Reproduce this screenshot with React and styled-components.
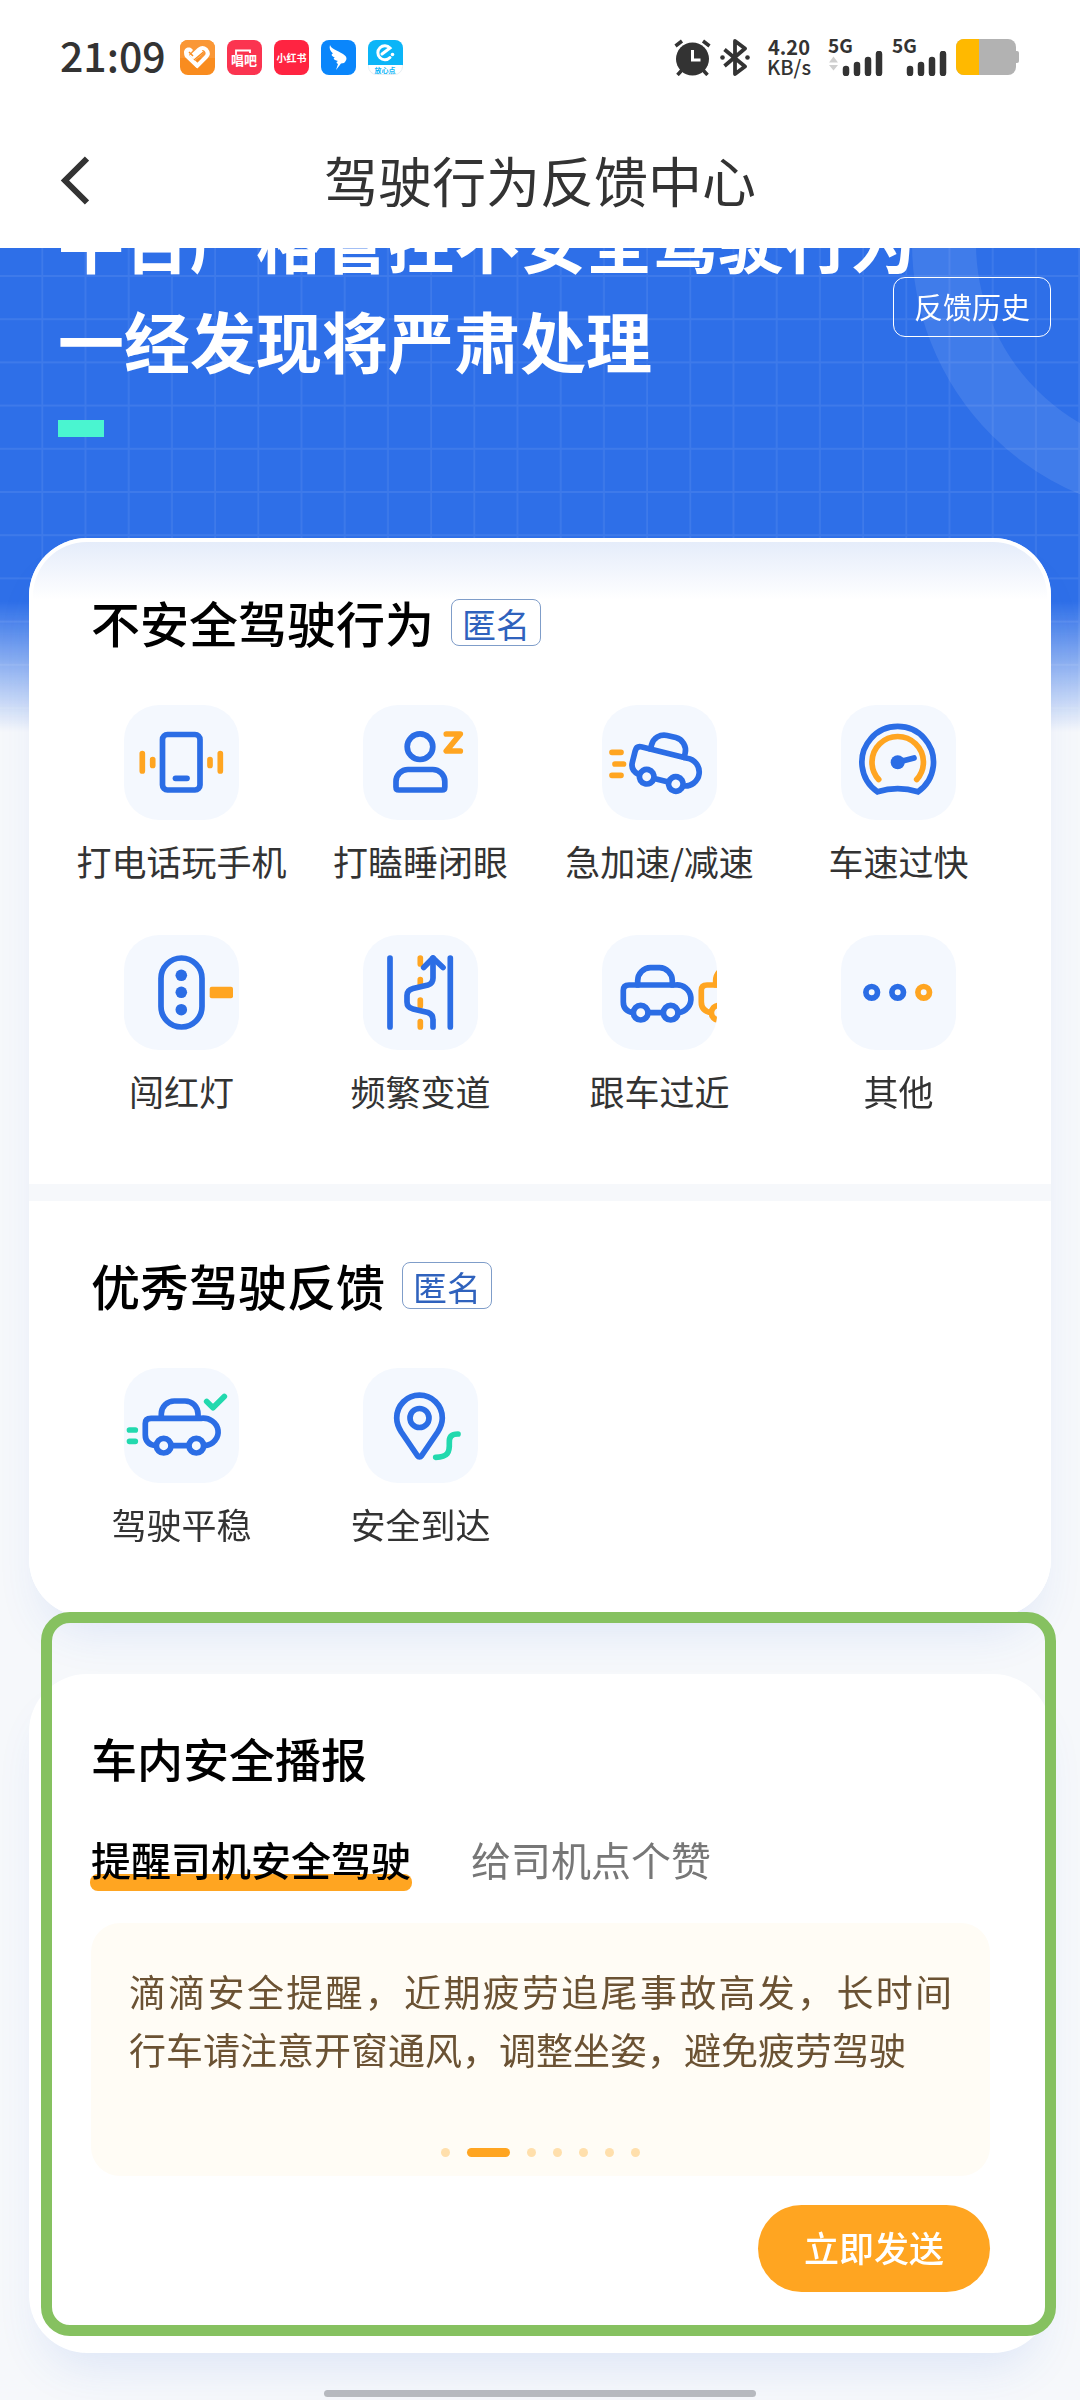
import styled, { createGlobalStyle } from "styled-components";
import React, { useState } from "react";

const BLUE = "#2b6de5";
const ORANGE = "#ffa521";
const GREEN = "#22d9ae";

/* ---------- status bar icons ---------- */

const AppIcons = () => (
  <AppIconRow>
    <svg viewBox="0 0 35 35">
      <rect width="35" height="35" rx="8" fill="#f98c1f" />
      <path d="M0 18V8A8 8 0 0 1 8 0H27A8 8 0 0 1 35 8V18Z" fill="#fa9736" />
      <path
        d="M4 12.500C4 8 9 6 12 9L13 10L9 15L19.500 24.500L16.500 28L5 17Q4 15 4 12.500Z"
        fill="#fff"
      />
      <path
        d="M11 17L19 9.500Q22.500 6.500 26 9.500Q29.500 13.500 26 17L16 27 M13.500 19L22.500 11"
        fill="none"
        stroke="#fff"
        strokeWidth="4"
      />
      <path d="M14 20L23.500 12 M9 12L13 16" stroke="#f98c1f" strokeWidth="1.500" />
    </svg>
    <svg viewBox="0 0 35 35">
      <rect width="35" height="35" rx="8" fill="#fb3450" />
      <path d="M9 15V10.500H23V13" fill="none" stroke="#fff" strokeWidth="1.800" />
      <IconText x="17" y="25" $size={13}>
        唱吧
      </IconText>
    </svg>
    <svg viewBox="0 0 35 35">
      <rect width="35" height="35" rx="8" fill="#ff2441" />
      <IconText x="17.500" y="22" $size={10}>
        小红书
      </IconText>
    </svg>
    <svg viewBox="0 0 35 35">
      <rect width="35" height="35" rx="8" fill="#0a86fb" />
      <path
        d="M9 5C10 9 16 10 22 14C27 17 26 20 23 23L20 23.500L15 30L17 24C15 23 15 22 17 21C12 20 12 18 14 17.500C10 16 10 14 12 13.500C9 11 8 8 9 5Z"
        fill="#fff"
      />
    </svg>
    <svg viewBox="0 0 35 35">
      <rect x="0.500" y="0.500" width="34" height="34" rx="8" fill="#fff" stroke="#e6eef3" />
      <path d="M0 25V8A8 8 0 0 1 8 0H27A8 8 0 0 1 35 8V25Z" fill="#0bb5f8" />
      <path
        d="M22 17.500A7 7 0 1 1 22 8L14 14"
        fill="none"
        stroke="#fff"
        strokeWidth="3"
        strokeLinecap="round"
      />
      <circle cx="24.500" cy="14.500" r="1.800" fill="#fff" />
      <IconText x="17" y="33" $size={7} fill="#0bb5f8">
        放心点
      </IconText>
    </svg>
  </AppIconRow>
);

const AlarmIcon = () => (
  <svg width="37" height="37" viewBox="0 0 37 37">
    <g stroke="#333" strokeWidth="3.500" fill="none">
      <path d="M1.500 7L8 2 M35.500 7L29 2" />
      <path d="M3.500 36L8 31 M33.500 36L29 31" />
    </g>
    <circle cx="18.500" cy="20" r="16.500" fill="#333" />
    <path d="M18.500 11V21H26.500" stroke="#fff" strokeWidth="3" fill="none" />
  </svg>
);

const BluetoothIcon = () => (
  <svg width="30" height="37" viewBox="0 0 30 37">
    <path
      d="M4.500 10.500L25 27.500L15 35V2L25 9.500L4.500 27"
      fill="none"
      stroke="#333"
      strokeWidth="3.800"
      strokeLinejoin="round"
    />
    <circle cx="2.500" cy="18.500" r="2.300" fill="#333" />
    <circle cx="27.500" cy="18.500" r="2.300" fill="#333" />
  </svg>
);

const Signal = ({ arrows }) => (
  <SignalBox>
    <span>5G</span>
    <svg width="55" height="25" viewBox="0 0 55 25">
      {arrows && <path d="M1 11.500L5.500 5.500L10 11.500Z M1 14L5.500 19.500L10 14Z" fill="#cfcfcf" />}
      <path
        d="M18 18V22 M29 14V22 M40 9V22 M51 3V22"
        stroke="#333"
        strokeWidth="6.500"
        strokeLinecap="round"
      />
    </svg>
  </SignalBox>
);

const BatteryIcon = () => (
  <svg width="64" height="37" viewBox="0 0 64 37">
    <path d="M58 12H61Q63 12 63 14V22Q63 24 61 24H58Z" fill="#b2b2b2" />
    <rect width="60" height="36" rx="8" fill="#b2b2b2" />
    <path d="M23 0V36H8A8 8 0 0 1 0 28V8A8 8 0 0 1 8 0Z" fill="#ffb900" />
  </svg>
);

/* ---------- behaviour icons ---------- */

const Car = ({ color = BLUE, ...rest }) => (
  <g stroke={color} {...rest}>
    <path d="M35.700 50V45.500A13 13 0 0 1 48.500 32.700H57.500A13 13 0 0 1 70.300 45.500V50" />
    <path d="M31 77.700Q21.300 76 21.300 67V55.500Q21.300 50 27 50H73.500A13.850 13.850 0 0 1 76.500 77.700" />
    <path d="M46.500 77.700H61" />
    <circle cx="38.700" cy="77.700" r="7.300" />
    <circle cx="68.700" cy="77.700" r="7.300" />
  </g>
);

const icons = {
  phone: (
    <>
      <rect x="38.500" y="29.500" width="37.500" height="55.500" rx="5" />
      <path d="M51.500 73.300H63" />
      <path d="M18.300 48.500V66 M28.700 54.500V60.500 M86 54.500V60.500 M96.300 48.500V66" stroke={ORANGE} />
    </>
  ),
  sleepy: (
    <>
      <circle cx="57" cy="41.700" r="12.800" />
      <path d="M33 76.500A12 12 0 0 1 45 64.500H69.800A12 12 0 0 1 81.800 76.500V82Q81.800 85 79 85H36Q33 85 33 82Z" />
      <path d="M83.300 29H97.300L83.300 46H97.300" stroke={ORANGE} />
    </>
  ),
  accelerate: (
    <>
      <Car transform="translate(44.700 71.700) rotate(14) translate(-38.700 -77.700)" />
      <path d="M10 47.300H19 M13 59H21.500 M10 70.300H19" stroke={ORANGE} />
    </>
  ),
  speed: (
    <>
      <path d="M36.500 86.800A35.800 35.800 0 1 1 76.900 86.800Q56.700 80.500 36.500 86.800Z" strokeLinejoin="miter" />
      <path d="M37.700 74.500A25.700 25.700 0 1 1 75.700 74.500" stroke={ORANGE} />
      <path d="M56.700 57.300L73 53" />
      <circle cx="56.700" cy="57.300" r="7" fill={BLUE} stroke="none" />
    </>
  ),
  light: (
    <>
      <rect x="37" y="23" width="41" height="69" rx="20.500" />
      <g fill={BLUE} stroke="none">
        <circle cx="57.300" cy="40.300" r="5.800" />
        <circle cx="57.300" cy="57.300" r="5.800" />
        <circle cx="57.300" cy="74.700" r="5.800" />
      </g>
      <rect x="85.700" y="51.700" width="23.300" height="11.600" rx="2" fill={ORANGE} stroke="none" />
    </>
  ),
  lane: (
    <>
      <path
        d="M57.300 23V29 M57.300 44.500V51 M57.300 65V71 M57.300 86.500V92"
        stroke={ORANGE}
      />
      <path d="M27 23V92 M87.300 23V92" />
      <path d="M70 92V85Q70 79.500 65 77.500L50 74Q44 72.500 44 67V60.500Q44 55 50 53.500L65 50Q70 48.500 70 43V23" />
      <path d="M60.700 32.500L70 23L80 32.500" />
    </>
  ),
  follow: (
    <>
      <Car />
      <Car color={ORANGE} transform="translate(78 0)" />
    </>
  ),
  other: (
    <>
      <circle cx="30.700" cy="57.300" r="5.800" />
      <circle cx="56.700" cy="57.300" r="5.800" />
      <circle cx="82.700" cy="57.300" r="5.800" stroke={ORANGE} />
    </>
  ),
  smooth: (
    <>
      <path d="M37.300 50V46A13 13 0 0 1 50.300 33H61A13 13 0 0 1 74 46V50" />
      <path d="M31.500 77.700Q21.300 76 21.300 67V55.500Q21.300 50.300 27 50.300H77A15 13.700 0 0 1 81 77.700" />
      <path d="M48 77.700H64" />
      <circle cx="39.700" cy="77.700" r="7.300" />
      <circle cx="72.300" cy="77.700" r="7.300" />
      <path d="M82.700 33.500L89 39.700L100.300 28.500 M5.500 62H11.300 M5.500 73.300H11.300" stroke={GREEN} />
    </>
  ),
  arrive: (
    <>
      <path d="M56.500 27.200C69.200 27.200 79.300 37.400 79.300 50C79.300 55.500 77.200 60 74.700 64L58.700 87.500Q56.500 90.500 54.300 87.500L38.300 64C35.800 60 33.700 55.500 33.700 50C33.700 37.400 43.800 27.200 56.500 27.200Z" />
      <circle cx="56.500" cy="50" r="9.500" />
      <path d="M95 66C88 66 86 69 86.300 75C86.700 84 85 89 72.700 89.300" stroke={GREEN} />
    </>
  ),
};

const badBehaviours = [
  { icon: "phone", label: "打电话玩手机" },
  { icon: "sleepy", label: "打瞌睡闭眼" },
  { icon: "accelerate", label: "急加速/减速" },
  { icon: "speed", label: "车速过快" },
  { icon: "light", label: "闯红灯" },
  { icon: "lane", label: "频繁变道" },
  { icon: "follow", label: "跟车过近" },
  { icon: "other", label: "其他" },
];

const goodBehaviours = [
  { icon: "smooth", label: "驾驶平稳" },
  { icon: "arrive", label: "安全到达" },
];

const tabs = ["提醒司机安全驾驶", "给司机点个赞"];

const BehaviourList = ({ items }) => (
  <Grid>
    {items.map((el) => (
      <Behaviour key={el.icon} type="button">
        <Tile viewBox="0 0 115 115" aria-hidden="true">
          {icons[el.icon]}
        </Tile>
        {el.label}
      </Behaviour>
    ))}
  </Grid>
);

const HeroBackground = () => (
  <HeroArt aria-hidden="true">
    <defs>
      <linearGradient id="heroFade" x1="0" y1="0" x2="0" y2="1">
        <stop offset="0" stopColor="#fff" />
        <stop offset="0.730" stopColor="#fff" />
        <stop offset="1" stopColor="#000" />
      </linearGradient>
      <mask id="heroMask">
        <rect width="100%" height="100%" fill="url(#heroFade)" />
      </mask>
      <pattern id="heroGrid" width="43.200" height="43.200" y="27" patternUnits="userSpaceOnUse">
        <path d="M0 1H43.200 M42.500 0V43.200" stroke="#fff" strokeOpacity="0.080" strokeWidth="2" />
      </pattern>
    </defs>
    <g mask="url(#heroMask)">
      <rect width="100%" height="100%" fill="#2e6fe8" />
      <rect width="100%" height="100%" fill="url(#heroGrid)" />
      <svg x="100%" overflow="visible">
        <circle cx="104" cy="-5" r="240" fill="none" stroke="#fff" strokeOpacity="0.090" strokeWidth="64" />
      </svg>
    </g>
  </HeroArt>
);

const App = () => {
  const [tab, setTab] = useState(0);
  const [slide, setSlide] = useState(1);

  return (
    <Page>
      <GlobalStyle />
      <StatusBar>
        <Clock>21:09</Clock>
        <AppIcons />
        <StatusRight>
          <AlarmIcon />
          <BluetoothIcon />
          <NetSpeed>
            <b>4.20</b>
            <span>KB/s</span>
          </NetSpeed>
          <Signal arrows />
          <Signal />
          <BatteryIcon />
        </StatusRight>
      </StatusBar>
      <NavBar>
        <BackButton type="button" aria-label="返回">
          <svg width="29" height="49" viewBox="0 0 29 49">
            <path d="M27 2.500L5 24.500L27 46.500" fill="none" stroke="#333" strokeWidth="6" />
          </svg>
        </BackButton>
        <NavTitle>驾驶行为反馈中心</NavTitle>
      </NavBar>

      <Main>
        <HeroBackground />
        <Hero>
          <HeroText>
            <HeroTitle>
              平台严格管控不安全驾驶行为
              <br />
              一经发现将严肃处理
            </HeroTitle>
            <Accent />
          </HeroText>
          <HistoryButton type="button">反馈历史</HistoryButton>
        </Hero>

        <CardGroup>
          <Section $tinted>
            <SectionHead>
              <SectionTitle>不安全驾驶行为</SectionTitle>
              <Tag>匿名</Tag>
            </SectionHead>
            <BehaviourList items={badBehaviours} />
          </Section>
          <Section>
            <SectionHead>
              <SectionTitle>优秀驾驶反馈</SectionTitle>
              <Tag>匿名</Tag>
            </SectionHead>
            <BehaviourList items={goodBehaviours} />
          </Section>
        </CardGroup>

        <BroadcastCard>
          <BroadcastTitle>车内安全播报</BroadcastTitle>
          <Tabs role="tablist">
            {tabs.map((el, i) => (
              <Tab key={el} type="button" role="tab" aria-selected={tab === i} $active={tab === i} onClick={() => setTab(i)}>
                {el}
              </Tab>
            ))}
          </Tabs>
          <MessageBox>
            <Message>
              <MessageLine $full>滴滴安全提醒，近期疲劳追尾事故高发，长时间</MessageLine>
              <MessageLine>行车请注意开窗通风，调整坐姿，避免疲劳驾驶</MessageLine>
            </Message>
            <Dots>
              {[0, 1, 2, 3, 4, 5, 6].map((i) => (
                <Dot key={i} type="button" aria-label={`${i + 1}`} $active={slide === i} onClick={() => setSlide(i)} />
              ))}
            </Dots>
          </MessageBox>
          <SendButton type="button">立即发送</SendButton>
          <Highlight />
        </BroadcastCard>
        <HomeBar />
      </Main>
    </Page>
  );
};

const GlobalStyle = createGlobalStyle`
  *, *::before, *::after {
    box-sizing: border-box;
  }
  body {
    margin: 0;
    background: #f6f8fb;
    color: #333;
    font-family: "Noto Sans CJK SC", "Noto Sans", sans-serif;
  }
  button {
    padding: 0;
    border: 0;
    background: none;
    color: inherit;
    font: inherit;
    cursor: pointer;
  }
  h1, h2, p {
    margin: 0;
  }
`;

const Page = styled.div`
  display: flex;
  flex-direction: column;
`;

const StatusBar = styled.div`
  display: flex;
  align-items: center;
  height: 114px;
  padding: 0 60px;
  background: #fff;
`;
const Clock = styled.span`
  padding-bottom: 6px;
  font-size: 41px;
  font-weight: 500;
  line-height: 60px;
`;
const AppIconRow = styled.div`
  display: flex;
  gap: 12px;
  margin-left: 14px;

  svg {
    width: 35px;
    height: 35px;
  }
`;
const IconText = styled.text`
  font-size: ${(p) => p.$size}px;
  font-weight: 700;
  text-anchor: middle;
  fill: ${(p) => p.fill || "#fff"};
`;
const StatusRight = styled.div`
  display: flex;
  align-items: center;
  gap: 9px;
  margin-left: auto;
`;
const NetSpeed = styled.div`
  display: flex;
  flex-direction: column;
  align-items: center;
  width: 60px;
  font-size: 20px;
  font-weight: 500;
  line-height: 20px;
`;
const SignalBox = styled.div`
  display: flex;
  flex-direction: column;
  font-size: 19px;
  font-weight: 700;
  line-height: 12px;
`;

const NavBar = styled.header`
  display: grid;
  grid-template-columns: 1fr auto 1fr;
  align-items: center;
  height: 134px;
  padding: 0 60px 2px;
  background: #fff;
`;
const BackButton = styled.button`
  display: flex;
  justify-self: start;
`;
const NavTitle = styled.h1`
  font-size: 54px;
  font-weight: 400;
  line-height: 78px;
`;

const Main = styled.main`
  position: relative;
  display: flex;
  flex-direction: column;
  padding: 0 29px 3px;
  overflow: hidden;
`;
const HeroArt = styled.svg`
  position: absolute;
  top: 0;
  left: 0;
  width: 100%;
  height: 484px;
`;
const Hero = styled.section`
  position: relative;
  display: flex;
  align-items: flex-start;
  height: 290px;
  padding-left: 29px;
`;
const HeroText = styled.div`
  flex: 1;
  min-width: 0;
`;
const HeroTitle = styled.h2`
  margin-top: -59px;
  color: #fff;
  font-size: 66px;
  font-weight: 700;
  line-height: 100px;
  white-space: nowrap;
`;
const Accent = styled.div`
  width: 46px;
  height: 17px;
  margin-top: 31px;
  background: #4af5d0;
`;
const HistoryButton = styled.button`
  flex: none;
  height: 60px;
  margin-top: 29px;
  padding: 0 20px 2px;
  border: 1px solid #fff;
  border-radius: 12px;
  color: #fff;
  font-size: 29px;
`;

const CardGroup = styled.div`
  position: relative;
  display: flex;
  flex-direction: column;
  gap: 17px;
  border-radius: 58px;
  box-shadow: 0 28px 48px -16px rgba(46, 100, 220, 0.13);
`;
const Section = styled.section`
  padding: 47px 33px 67px;
  border-radius: ${(p) => (p.$tinted ? "58px 58px 0 0" : "0 0 58px 58px")};
  background: ${(p) =>
    p.$tinted ? "linear-gradient(#e3ebfa, #fff 62px)" : "#fff"};
  box-shadow: inset 0 0 0 4px #fff;
`;
const SectionHead = styled.div`
  display: flex;
  align-items: center;
  gap: 17px;
  padding-left: 29px;
`;
const SectionTitle = styled.h2`
  color: #000;
  font-size: 49px;
  font-weight: 500;
  line-height: 74px;
`;
const Tag = styled.span`
  padding: 2px 10px 0;
  border: 1px solid #7f9dc9;
  border-radius: 8px;
  color: #2f62bd;
  font-size: 34px;
  line-height: 43px;
`;
const Grid = styled.div`
  display: grid;
  grid-template-columns: repeat(4, 1fr);
  row-gap: 48px;
  margin-top: 46px;
`;
const Behaviour = styled.button`
  display: flex;
  flex-direction: column;
  align-items: center;
  gap: 15px;
  font-size: 35px;
  line-height: 52px;
  white-space: nowrap;
`;
const Tile = styled.svg`
  width: 115px;
  height: 115px;
  border-radius: 35px;
  background: #f4f8fe;
  fill: none;
  stroke: ${BLUE};
  stroke-width: 5.7px;
  stroke-linecap: round;
  stroke-linejoin: round;
`;

const BroadcastCard = styled.section`
  position: relative;
  display: flex;
  flex-direction: column;
  margin-top: 57px;
  padding: 48px 61px 61px 62px;
  border-radius: 58px;
  background: #fff;
  box-shadow: 0 28px 48px -16px rgba(46, 100, 220, 0.13);
`;
const BroadcastTitle = styled.h2`
  color: #000;
  font-size: 46px;
  font-weight: 500;
  line-height: 70px;
`;
const Tabs = styled.div`
  display: flex;
  gap: 60px;
  margin-top: 37px;
`;
const Tab = styled.button`
  position: relative;
  z-index: 0;
  padding-bottom: 2px;
  color: ${(p) => (p.$active ? "#000" : "#777")};
  font-size: 40px;
  font-weight: ${(p) => (p.$active ? 500 : 400)};
  line-height: 60px;

  &::before {
    content: "";
    display: ${(p) => (p.$active ? "block" : "none")};
    position: absolute;
    z-index: -1;
    right: -1px;
    bottom: 0;
    left: -1px;
    height: 17px;
    border-radius: 8px;
    background: ${ORANGE};
  }
`;
const MessageBox = styled.div`
  display: flex;
  flex-direction: column;
  margin-top: 32px;
  padding: 39px 38px 19px;
  border-radius: 29px;
  background: #fffcf5;
`;
const Message = styled.p`
  color: #6b5233;
  font-size: 37px;
  line-height: 58px;
`;
const MessageLine = styled.span`
  display: block;
  text-align-last: ${(p) => (p.$full ? "justify" : "left")};
`;
const Dots = styled.div`
  display: flex;
  justify-content: center;
  gap: 17px;
  margin-top: 70px;
`;
const Dot = styled.button`
  width: ${(p) => (p.$active ? 43 : 9)}px;
  height: 9px;
  border-radius: 5px;
  background: ${(p) => (p.$active ? ORANGE : "#ffdfac")};
`;
const SendButton = styled.button`
  align-self: flex-end;
  height: 87px;
  margin-top: 29px;
  padding: 0 46px 4px;
  border-radius: 44px;
  background: ${ORANGE};
  color: #fff;
  font-size: 35px;
  font-weight: 500;
`;
const Highlight = styled.div`
  position: absolute;
  top: -62px;
  right: -5px;
  bottom: 17px;
  left: 12px;
  border: 11px solid #86c160;
  border-radius: 29px;
  pointer-events: none;
`;
const HomeBar = styled.div`
  align-self: center;
  width: 40vw;
  height: 7px;
  margin-top: 37px;
  border-radius: 4px;
  background: #b9bbbf;
`;

export default App;
